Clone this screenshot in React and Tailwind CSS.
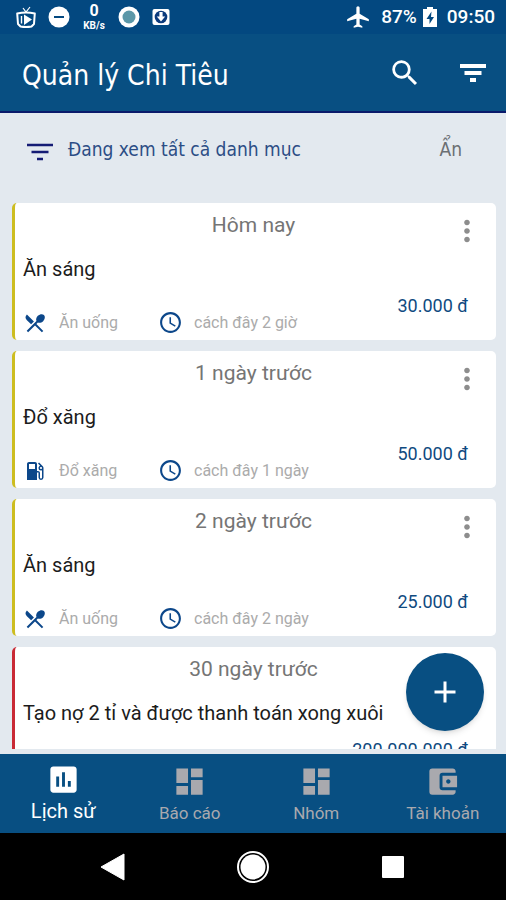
import { useState } from 'react';
import {
    MdSearch, MdMoreVert, MdLocalDining, MdLocalGasStation, MdSchedule, MdAdd,
    MdAssessment, MdDashboard, MdAccountBalanceWallet, MdAirplanemodeActive,
} from 'react-icons/md';

const transactions = [
    { id: 1, day: 'Hôm nay', title: 'Ăn sáng', category: 'Ăn uống', icon: MdLocalDining, time: 'cách đây 2 giờ', amount: '30.000 đ', color: 'border-[#cdbd20]' },
    { id: 2, day: '1 ngày trước', title: 'Đổ xăng', category: 'Đổ xăng', icon: MdLocalGasStation, time: 'cách đây 1 ngày', amount: '50.000 đ', color: 'border-[#cdbd20]' },
    { id: 3, day: '2 ngày trước', title: 'Ăn sáng', category: 'Ăn uống', icon: MdLocalDining, time: 'cách đây 2 ngày', amount: '25.000 đ', color: 'border-[#cdbd20]' },
    { id: 4, day: '30 ngày trước', title: 'Tạo nợ 2 tỉ và được thanh toán xong xuôi', amount: '200.000.000 đ', color: 'border-[#c92a35]' },
];

const tabs = [
    { id: 'history', label: 'Lịch sử', icon: MdAssessment },
    { id: 'report', label: 'Báo cáo', icon: MdDashboard },
    { id: 'group', label: 'Nhóm', icon: MdDashboard },
    { id: 'account', label: 'Tài khoản', icon: MdAccountBalanceWallet },
];

function FilterIcon({ className, thickness }) {
    return (
        <svg className={className} width="26" height="20" viewBox="0 0 26 20" stroke="currentColor" strokeWidth={thickness}>
            <path d="M0 3h26M4.500 10h17M10 17h6" />
        </svg>
    );
}

function StatusBar() {
    return (
        <div className="h-[34px] shrink-0 bg-[#034880] text-white flex items-center justify-between pl-4 pr-[11px]">
            <div className="flex items-center gap-3">
                <svg width="20" height="22" viewBox="0 0 20 22" fill="none" stroke="currentColor" strokeWidth="1.6">
                    <path d="M7 2l3 4 4-5" strokeWidth="1.2" />
                    <path d="M1.200 7.500Q10 5.500 18.800 7.500L18 18l-2.500 2.500Q10 21.500 4.500 20.500L2 18z" strokeWidth="2" strokeLinejoin="round" />
                    <path d="M5.500 10v7.500" strokeWidth="1.400" />
                    <path d="M8 8.500l8 5-8 5.500z" fill="currentColor" stroke="none" />
                </svg>
                <svg width="22" height="22" viewBox="0 0 22 22">
                    <circle cx="11" cy="11" r="10.500" fill="currentColor" />
                    <path d="M6 11h10" stroke="#034880" strokeWidth="2" />
                </svg>
                <div className="w-6 flex flex-col items-center font-bold">
                    <span className="text-base leading-[18px]">0</span>
                    <span className="text-[10px] leading-3">KB/s</span>
                </div>
                <svg width="22" height="22" viewBox="0 0 22 22">
                    <circle cx="11" cy="11" r="10.500" fill="currentColor" />
                    <circle cx="11" cy="11" r="6.500" fill="#5b97a8" />
                </svg>
                <svg width="18" height="18" viewBox="0 0 18 18">
                    <rect x="0.500" y="1" width="17" height="16" rx="2" fill="currentColor" />
                    <circle cx="9" cy="9" r="6.300" fill="#0b3a7c" />
                    <path d="M7.400 4h3.200v4.500h2.600L9 13.500 4.800 8.500h2.600z" fill="currentColor" />
                </svg>
            </div>
            <div className="flex items-center text-[19px] font-medium">
                <MdAirplanemodeActive size={26} />
                <span className="ml-2.5">87%</span>
                <svg className="ml-1.5" width="14" height="20" viewBox="0 0 14 20">
                    <path d="M4 0h6v2h4v18H0V2h4z" fill="currentColor" />
                    <path d="M8.500 4.500L3.500 12h3v5l4.500-7H8z" fill="#034880" />
                </svg>
                <span className="ml-2.5">09:50</span>
            </div>
        </div>
    );
}

function TransactionCard({ item }) {
    const Icon = item.icon;
    return (
        <article className={`shrink-0 bg-white rounded-[5px] border-l-[3px] ${item.color} pl-2 pr-7 pt-2 pb-[5px] relative`}>
            <h2 className="text-center text-[21px] leading-7 text-[#757575] -mr-4">{item.day}</h2>
            <button className="absolute top-[11px] right-3 text-[#8d8d8d]" aria-label="Tùy chọn">
                <MdMoreVert size={34} />
            </button>
            <p className="mt-4 text-xl leading-7 text-[#1c1c1c]">{item.title}</p>
            <p className="mt-[11px] text-right text-lg leading-6 text-[#0f4a80]">{item.amount}</p>
            {Icon && (
                <div className="flex items-center text-base leading-5 text-[#ababab] -mt-2">
                    <div className="flex items-center gap-3 w-[135px]">
                        <Icon className="text-[#0c478a]" size={24} />
                        <span>{item.category}</span>
                    </div>
                    <div className="flex items-center gap-[11px]">
                        <MdSchedule className="text-[#0c478a]" size={25} />
                        <span>{item.time}</span>
                    </div>
                </div>
            )}
        </article>
    );
}

export default function App() {
    const [tab, setTab] = useState('history');
    const [showFilter, setShowFilter] = useState(true);

    return (
        <div className="h-screen flex flex-col bg-[#e3e9ef] font-['Roboto','Noto_Sans',sans-serif]">
            <StatusBar />
            <header className="h-[79px] shrink-0 bg-[#084f82] border-b-2 border-[#0a1a6b] text-white flex items-center justify-between pl-[22px] pr-5">
                <h1 className="pt-1.5 text-[28px] font-['DejaVu_Sans_Condensed','Noto_Sans',sans-serif]">Quản lý Chi Tiêu</h1>
                <div className="flex items-center gap-[38px]">
                    <button aria-label="Tìm kiếm"><MdSearch size={34} /></button>
                    <button aria-label="Lọc"><FilterIcon thickness="4" /></button>
                </div>
            </header>

            {showFilter && (
                <div className="h-[90px] shrink-0 flex items-start pt-5 pl-[27px] pr-11 text-[19px] leading-8 font-['DejaVu_Sans_Condensed','Noto_Sans',sans-serif]">
                    <FilterIcon className="mt-[9px] text-[#151c75]" thickness="2.500" />
                    <span className="ml-[15px] text-[#2c4d85]">Đang xem tất cả danh mục</span>
                    <button className="ml-auto text-[#6b6f73]" onClick={() => setShowFilter(false)}>Ẩn</button>
                </div>
            )}

            <main className="flex-1 min-h-0 relative pb-[5px]">
                <div className="h-full overflow-hidden flex flex-col gap-[11px] pl-3 pr-2.5">
                    {transactions.map(item => <TransactionCard key={item.id} item={item} />)}
                </div>
                <button
                    className="absolute right-[22px] bottom-[23px] size-[78px] rounded-full bg-[#084f82] text-white flex items-center justify-center shadow-md"
                    aria-label="Thêm"
                >
                    <MdAdd size={36} />
                </button>
            </main>

            <nav className="h-[79px] shrink-0 bg-[#084f82] grid grid-cols-4">
                {tabs.map(({ id, label, icon: Icon }) => (
                    <button
                        key={id}
                        onClick={() => setTab(id)}
                        className={`flex flex-col items-center ${tab === id ? 'pt-2 text-white text-xl' : 'pt-2.5 text-[#a9a9ae] text-[17px]'}`}
                    >
                        <Icon size={35} />
                        <span className="leading-7">{label}</span>
                    </button>
                ))}
            </nav>

            <div className="h-[67px] shrink-0 bg-black text-white flex items-center justify-center gap-[110px]">
                <button aria-label="Quay lại">
                    <svg width="26" height="28" viewBox="0 0 26 28" fill="currentColor"><path d="M1 14L24 1v26z" stroke="currentColor" strokeLinejoin="round" /></svg>
                </button>
                <button aria-label="Trang chủ">
                    <svg width="34" height="34" viewBox="0 0 34 34">
                        <circle cx="17" cy="17" r="15" fill="none" stroke="currentColor" strokeWidth="2" />
                        <circle cx="17" cy="17" r="12.500" fill="currentColor" />
                    </svg>
                </button>
                <button aria-label="Ứng dụng gần đây">
                    <svg width="26" height="26" viewBox="0 0 26 26"><rect x="2" y="2" width="22" height="22" rx="1" fill="currentColor" /></svg>
                </button>
            </div>
        </div>
    );
}
